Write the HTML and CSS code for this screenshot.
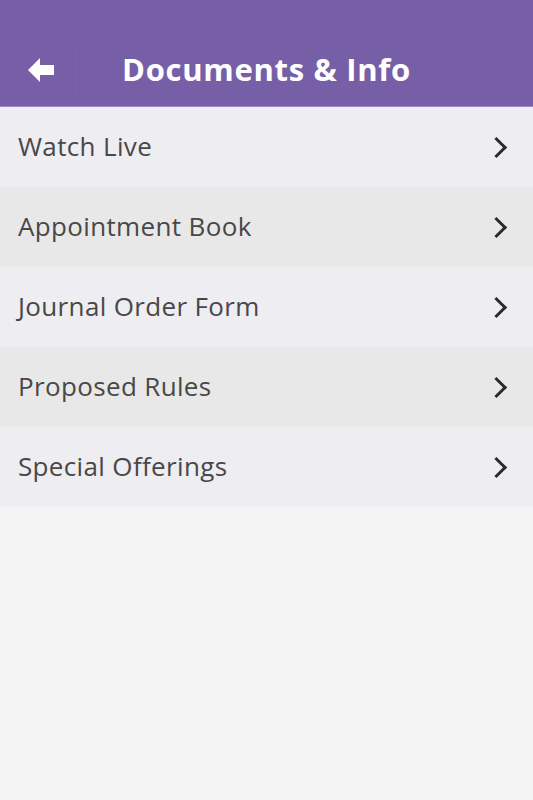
FILE: index.html
```html
<!DOCTYPE html>
<html>

<head>
    <meta charset="UTF-8">
    <title>Documents & Info</title>
    <link rel="stylesheet" href="styles.css">
</head>

<body>
    <div class="header">
        <div class="back">
            <svg width="26" height="24" viewBox="0 0 26 24">
                <path d="M0 12 L12 0 L12 7 L26 7 L26 17 L12 17 L12 24 Z" fill="#fff" />
            </svg>
        </div>
        <h1>Documents &amp; Info</h1>
    </div>

    <div class="menu">
        <div class="item odd"><span>Watch Live</span><i class="chev"></i></div>
        <div class="item even"><span>Appointment Book</span><i class="chev"></i></div>
        <div class="item odd"><span>Journal Order Form</span><i class="chev"></i></div>
        <div class="item even"><span>Proposed Rules</span><i class="chev"></i></div>
        <div class="item odd"><span>Special Offerings</span><i class="chev"></i></div>
    </div>
</body>

</html>
```

FILE: styles.css
```css
body {
    font-family: "Open Sans", sans-serif;
    margin: 0;
    background-color: #f4f4f4;
    height: 800px;
}

.header {
    height: 107px;
    background-color: #775fa8;
    border-bottom: 1px solid #9a8bc2;
    display: flex;
    align-items: flex-end;
    box-sizing: border-box;
    padding-bottom: 17px;
}

.back {
    width: 76px;
    height: 50px;
    display: flex;
    align-items: center;
    border-right: 1px solid #7a64ab;
    box-sizing: border-box;
    padding-left: 28px;
    margin-bottom: -6px;
}

h1 {
    margin: 0 0 0 46px;
    color: #fff;
    font-size: 31px;
    font-weight: 700;
    letter-spacing: 0.7px;
    line-height: 40px;
}

.item {
    height: 80px;
    display: flex;
    align-items: center;
    justify-content: space-between;
    padding: 0 29px 0 18px;
    color: #484848;
    font-size: 26px;
    font-weight: 370;
    letter-spacing: 0.35px;
}

.item span {
    margin-top: -3px;
}

.odd {
    background-color: #ededf2;
}

.even {
    background-color: #e8e8e8;
}

.chev {
    width: 12px;
    height: 12px;
    border-top: 3.5px solid #2a2a2a;
    border-right: 3.5px solid #2a2a2a;
    transform: rotate(45deg);
}
```
